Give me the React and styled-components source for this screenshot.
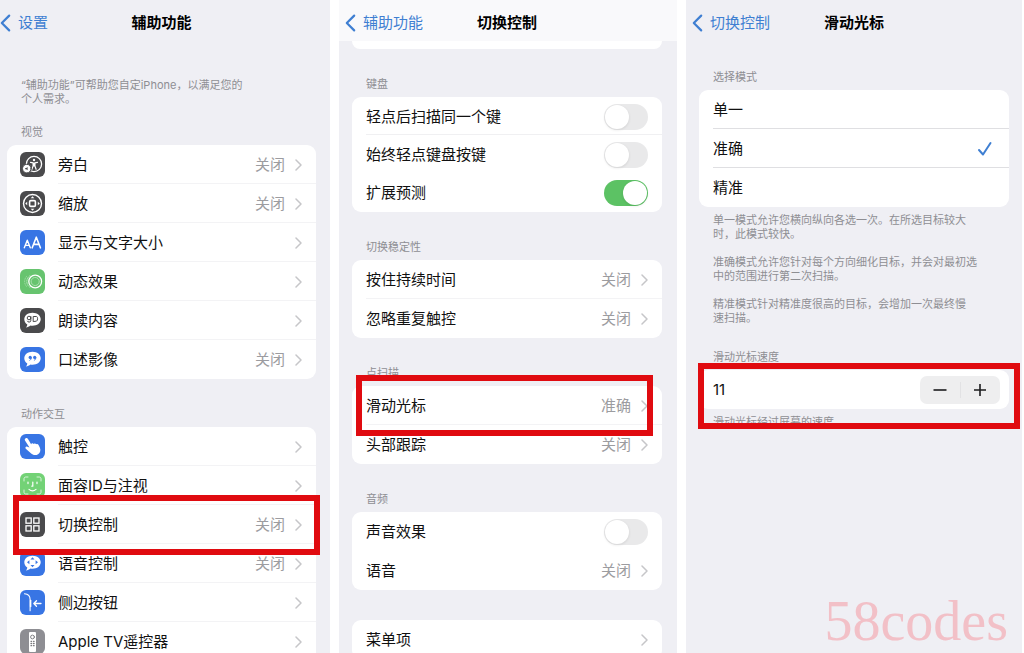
import React, { useState } from 'react';
import styled, { createGlobalStyle } from 'styled-components';

const App = () => {
    const [mode, setMode] = useState('准确');
    const [speed, setSpeed] = useState(11);

    return (
        <>
            <GlobalStyle />
            <Page>
                <Screen $left={7} $right={14}>
                    <NavBar back="设置" title="辅助功能" />
                    <Content>
                        <Intro>
                            “辅助功能”可帮助您自定iPhone，以满足您的
                            <br />
                            个人需求。
                        </Intro>
                        <Section $space={19}>
                            <SectionTitle>视觉</SectionTitle>
                            <Card>
                                {vision.map((item) => (
                                    <LinkRow key={item.label} {...item} />
                                ))}
                            </Card>
                        </Section>
                        <Section>
                            <SectionTitle>动作交互</SectionTitle>
                            <Card>
                                {motor.map((item) => (
                                    <LinkRow key={item.label} {...item} />
                                ))}
                            </Card>
                        </Section>
                    </Content>
                </Screen>

                <Screen $left={13} $right={15}>
                    <NavBar back="辅助功能" title="切换控制" raised />
                    <Content>
                        <CardEnd />
                        <Section>
                            <SectionTitle>键盘</SectionTitle>
                            <Card $compact>
                                <ToggleRow label="轻点后扫描同一个键" divided />
                                <ToggleRow label="始终轻点键盘按键" />
                                <ToggleRow label="扩展预测" defaultChecked />
                            </Card>
                        </Section>
                        <Section>
                            <SectionTitle>切换稳定性</SectionTitle>
                            <Card>
                                <LinkRow label="按住持续时间" value="关闭" />
                                <LinkRow label="忽略重复触控" value="关闭" />
                            </Card>
                        </Section>
                        <Section>
                            <SectionTitle>点扫描</SectionTitle>
                            <Card>
                                <LinkRow
                                    label="滑动光标"
                                    value={mode}
                                    marked={{ top: 11, right: -9, bottom: 11, left: -4 }}
                                />
                                <LinkRow label="头部跟踪" value="关闭" />
                            </Card>
                        </Section>
                        <Section>
                            <SectionTitle>音频</SectionTitle>
                            <Card>
                                <ToggleRow label="声音效果" tall />
                                <LinkRow label="语音" value="关闭" />
                            </Card>
                        </Section>
                        <Section $space={30}>
                            <Card>
                                <LinkRow label="菜单项" />
                            </Card>
                        </Section>
                    </Content>
                </Screen>

                <Screen $left={13} $right={13}>
                    <NavBar back="切换控制" title="滑动光标" />
                    <Content>
                        <Section $space={29}>
                            <SectionTitle>选择模式</SectionTitle>
                            <Card>
                                {modes.map((name) => (
                                    <OptionRow key={name}>
                                        <RowBody $line="#dfdfe2">
                                            <RowLabel>{name}</RowLabel>
                                            <Radio
                                                type="radio"
                                                name="mode"
                                                checked={mode === name}
                                                onChange={() => setMode(name)}
                                            />
                                            {mode === name && <CheckIcon />}
                                        </RowBody>
                                    </OptionRow>
                                ))}
                            </Card>
                            <Footnote>
                                单一模式允许您横向纵向各选一次。在所选目标较大
                                <br />
                                时，此模式较快。
                            </Footnote>
                            <Footnote $next>
                                准确模式允许您针对每个方向细化目标，并会对最初选
                                <br />
                                中的范围进行第二次扫描。
                            </Footnote>
                            <Footnote $next>
                                精准模式针对精准度很高的目标，会增加一次最终慢
                                <br />
                                速扫描。
                            </Footnote>
                        </Section>
                        <Section $space={25}>
                            <SectionTitle>滑动光标速度</SectionTitle>
                            <Card>
                                <StepperRow>
                                    <RowLabel>{speed}</RowLabel>
                                    <Stepper>
                                        <StepButton aria-label="减少" onClick={() => setSpeed(speed - 1)}>
                                            <svg width="14" height="14" viewBox="0 0 14 14" stroke="#1c1c1e" strokeWidth="1.6">
                                                <path d="M0.5 7h13" />
                                            </svg>
                                        </StepButton>
                                        <StepLine />
                                        <StepButton aria-label="增加" onClick={() => setSpeed(speed + 1)}>
                                            <svg width="14" height="14" viewBox="0 0 14 14" stroke="#1c1c1e" strokeWidth="1.6">
                                                <path d="M1 7h12M7 1v12" />
                                            </svg>
                                        </StepButton>
                                    </Stepper>
                                    <Mark $top={7} $right={11} $bottom={20} $left={1} />
                                </StepperRow>
                            </Card>
                            <Footnote>滑动光标经过屏幕的速度</Footnote>
                        </Section>
                    </Content>
                    <Watermark>58codes</Watermark>
                </Screen>
            </Page>
        </>
    );
};

const NavBar = ({ back, title, raised }) => (
    <Bar $raised={raised}>
        <Back href="#">
            <svg width="11" height="18" viewBox="0 0 11 18" fill="none" stroke="#3f7fd2" strokeWidth="2.2" strokeLinecap="round" strokeLinejoin="round">
                <path d="M9.2 1.6L1.8 9l7.4 7.4" />
            </svg>
            {back}
        </Back>
        <Title>{title}</Title>
    </Bar>
);

const LinkRow = ({ label, value, icon, color, marked }) => (
    <Row href="#">
        {icon && (
            <Tile $color={color}>
                <svg width="25" height="25" viewBox="0 0 25 25" fill="none" stroke="#fff" strokeLinecap="round" strokeLinejoin="round">
                    {icon}
                </svg>
            </Tile>
        )}
        <RowBody>
            <RowLabel>{label}</RowLabel>
            {value && <RowValue>{value}</RowValue>}
            <Chevron />
        </RowBody>
        {marked && (
            <Mark $top={marked.top} $right={marked.right} $bottom={marked.bottom} $left={marked.left} />
        )}
    </Row>
);

const ToggleRow = ({ label, divided, tall, defaultChecked }) => (
    <OptionRow $short={!tall}>
        <RowBody $line={divided ? '#f0f0f2' : 'transparent'}>
            <RowLabel>{label}</RowLabel>
            <Switch type="checkbox" role="switch" defaultChecked={defaultChecked} />
        </RowBody>
    </OptionRow>
);

const Chevron = () => (
    <svg width="7" height="12" viewBox="0 0 7 12" fill="none" stroke="#c6c6c9" strokeWidth="1.5" strokeLinecap="round" strokeLinejoin="round">
        <path d="M1 1l5 5-5 5" />
    </svg>
);

const CheckIcon = () => (
    <svg width="20" height="16" viewBox="0 0 20 16" fill="none" stroke="#3f7fd2" strokeWidth="2" strokeLinecap="round" strokeLinejoin="round">
        <path d="M4 9l4 4.5L15.5 2" />
    </svg>
);

const dark = '#4a4a4c';
const blue = '#3875e4';
const green = '#67c46f';

// speech bubble shared by several tiles
const Bubble = () => (
    <path d="M12.5 4.8c4.6 0 8.200 2.800 8.200 6.500s-3.600 6.500-8.200 6.500c-.7 0-1.400-.1-2-.2-1.300 1.100-2.900 1.900-4.500 1.900.9-.9 1.300-1.900 1.300-2.900-1.900-1.200-3-3.100-3-5.300 0-3.700 3.600-6.500 8.200-6.500z" fill="#fff" stroke="none" />
);

const vision = [
    {
        label: '旁白',
        value: '关闭',
        color: dark,
        icon: (
            <>
                <circle cx="14" cy="12" r="7.6" strokeWidth="1.3" />
                <circle cx="14" cy="8" r="1.2" fill="#fff" stroke="none" />
                <path d="M10.5 10.4l2.6.5v3l-1.2 3.4M17.5 10.4l-2.6.5v3l1.2 3.4M14 11v3" strokeWidth="1.2" />
                <circle cx="6.8" cy="16.6" r="4.3" fill="#fff" stroke="#4a4a4c" strokeWidth="1" />
                <path d="M5.2 16v1.2h1l1.4 1v-3.2l-1.4 1z" fill="#4a4a4c" stroke="none" />
            </>
        ),
    },
    {
        label: '缩放',
        value: '关闭',
        color: dark,
        icon: (
            <>
                <circle cx="12.5" cy="12.5" r="9" strokeWidth="1.4" />
                <rect x="9.6" y="9.6" width="5.8" height="5.8" rx="1.2" strokeWidth="1.6" />
                <path d="M12.5 5.2l1.8 2h-3.6zM12.5 19.8l1.8-2h-3.6zM5.2 12.5l2-1.8v3.6zM19.8 12.5l-2-1.8v3.6z" fill="#fff" stroke="none" />
            </>
        ),
    },
    {
        label: '显示与文字大小',
        color: blue,
        icon: (
            <>
                <path d="M4.3 17.8l3-7.6 3 7.6M5.300 15.400h4" strokeWidth="1.4" />
                <path d="M12.200 17.800l4.100-10.600 4.100 10.600M13.600 14.400h5.400" strokeWidth="1.6" />
            </>
        ),
    },
    {
        label: '动态效果',
        color: green,
        icon: (
            <>
                <circle cx="15.2" cy="12.5" r="6.4" strokeWidth="1.3" />
                <circle cx="15.2" cy="12.5" r="4" strokeWidth="0.5" strokeDasharray="1 1" />
                <path d="M10 6.6a7 7 0 0 0 0 11.8" strokeWidth="0.9" strokeDasharray="1.4 1.2" opacity="0.5" />
                <path d="M6.6 7.4a7.6 7.6 0 0 0 0 10.2" strokeWidth="0.8" strokeDasharray="1 1.4" opacity="0.4" />
            </>
        ),
    },
    {
        label: '朗读内容',
        color: dark,
        icon: (
            <>
                <Bubble />
                <circle cx="9" cy="10" r="1.800" stroke="#4a4a4c" strokeWidth="1" />
                <path d="M10.800 8.500v4.300c0 1.700-3.100 1.700-3.500.4M13.200 13.200V8.500h3.300c1.500 0 1.500 4.700 0 4.700z" stroke="#4a4a4c" strokeWidth="1" />
            </>
        ),
    },
    {
        label: '口述影像',
        value: '关闭',
        color: blue,
        icon: (
            <>
                <Bubble />
                <circle cx="10.200" cy="10.400" r="1.600" fill="#3875e4" stroke="none" />
                <circle cx="14.700" cy="10.400" r="1.600" fill="#3875e4" stroke="none" />
                <path d="M11.300 10.600c0 1.400-.5 2.200-1.500 2.700M15.800 10.600c0 1.400-.5 2.200-1.500 2.700" stroke="#3875e4" strokeWidth="0.9" />
            </>
        ),
    },
];

const motor = [
    {
        label: '触控',
        color: blue,
        icon: (
            <path d="M5.700 4.300c.9-.5 1.800-.1 2.300.7l3.100 5.200.5-.6c.7-.5 1.600-.3 2.100.4l.4-.3c.8-.4 1.700-.2 2.100.5.800-.5 1.800-.3 2.200.5l1.400 2.900c1.200 2.600.5 5.300-1.700 6.600-2.500 1.500-5.200 1-7.200-.9L5.800 14.700c-1-1 .1-2.600 1.500-2l2.200.9L5 6.500c-.5-.8-.2-1.700.7-2.200z" fill="#fff" stroke="none" />
        ),
    },
    {
        label: '面容ID与注视',
        color: '#73d276',
        icon: (
            <>
                <path d="M4 8V5.800C4 4.800 4.800 4 5.800 4H8M17 4h2.200c1 0 1.800.8 1.800 1.800V8M4 17v2.200c0 1 .8 1.800 1.800 1.800H8M17 21h2.200c1 0 1.800-.8 1.800-1.800V17" strokeWidth="0.9" opacity="0.8" />
                <path d="M8 9v1.600M17 9v1.600M12.800 9v4.200h-1M9 16.400c2 1.700 5 1.700 7 0" strokeWidth="1.2" />
            </>
        ),
    },
    {
        label: '切换控制',
        value: '关闭',
        color: dark,
        marked: { top: 10, right: 4, bottom: 11, left: -6 },
        icon: (
            <g strokeWidth="1.300" strokeLinejoin="miter">
                <rect x="6" y="6" width="5.200" height="5.200" />
                <rect x="13.800" y="6" width="5.200" height="5.200" />
                <rect x="6" y="13.800" width="5.200" height="5.200" />
                <rect x="13.800" y="13.800" width="5.200" height="5.200" />
            </g>
        ),
    },
    {
        label: '语音控制',
        value: '关闭',
        color: blue,
        icon: (
            <>
                <Bubble />
                <path d="M12.500 6.300l2 2.200h-4zM12.500 16.300l2-2.200h-4zM7 11.300l2.400-2v4zM18 11.300l-2.400-2v4z" fill="#3875e4" stroke="none" />
            </>
        ),
    },
    {
        label: '侧边按钮',
        color: blue,
        icon: (
            <>
                <path d="M4.500 3.800c3.500.3 5.600 2.200 5.600 5.600v11.400" strokeWidth="1.100" />
                <path d="M10.600 10.500v6" strokeWidth="1.500" />
                <path d="M21 13.500h-7M16.500 10.800l-2.700 2.700 2.700 2.700" strokeWidth="1.300" />
            </>
        ),
    },
    {
        label: 'Apple TV遥控器',
        color: '#8e8e93',
        icon: (
            <>
                <rect x="9" y="3" width="7" height="20" rx="1" fill="#fff" stroke="none" />
                <g stroke="#77777b" strokeWidth="0.900">
                    <circle cx="12.500" cy="8" r="1.900" />
                    <path d="M11 12.300h.6M13.500 12.300h.6M11 14.500h.6M13.500 14.500h.6M11 16.700h.6M13.500 16.700h.6" strokeWidth="1.300" />
                </g>
            </>
        ),
    },
];

const modes = ['单一', '准确', '精准'];

const GlobalStyle = createGlobalStyle`
    * {
        box-sizing: border-box;
    }

    body {
        margin: 0;
        background: #fff;
        color: #111;
        font-family: Inter, "Noto Sans CJK SC", sans-serif;
        font-size: 15px;
    }
`;

const Page = styled.main`
    display: grid;
    grid-template-columns: 330fr 338fr 336fr;
    column-gap: 9px;
    height: 100vh;
    padding-right: 2px;
`;

const Screen = styled.section`
    --left: ${(props) => props.$left}px;
    --right: ${(props) => props.$right}px;
    position: relative;
    min-width: 0;
    overflow: hidden;
    background: #efeff4;
`;

const Bar = styled.header`
    display: grid;
    grid-template-columns: 1fr auto 1fr;
    align-items: center;
    height: 41px;
    padding: 4px var(--right) 0 var(--left);
    background: ${(props) => (props.$raised ? '#f9f9fb' : 'transparent')};
`;

const Back = styled.a`
    display: flex;
    align-items: center;
    gap: 7px;
    margin-left: -7px;
    color: #3f7fd2;
    line-height: 20px;
    text-decoration: none;
`;

const Title = styled.h1`
    margin: 0;
    color: #000;
    font-size: 15px;
    font-weight: 700;
    line-height: 20px;
`;

const Content = styled.div`
    padding: 0 var(--right) 0 var(--left);
`;

const Intro = styled.p`
    margin: 37px 0 0;
    padding: 0 14px;
    color: #8e8e93;
    font-size: 11px;
    line-height: 14px;
    white-space: nowrap;
`;

const Section = styled.section`
    padding-top: ${(props) => props.$space || 28}px;
`;

const SectionTitle = styled.h2`
    margin: 0 0 6px;
    padding: 0 14px;
    color: #8e8e93;
    font-size: 11px;
    font-weight: 400;
    line-height: 14px;
`;

const Card = styled.div`
    padding-bottom: ${(props) => (props.$compact ? 1 : 0)}px;
    border-radius: 9px;
    background: #fff;
`;

const CardEnd = styled.div`
    height: 8px;
    border-radius: 0 0 9px 9px;
    background: #fff;
`;

const Row = styled.a`
    position: relative;
    display: flex;
    align-items: center;
    gap: 13px;
    height: 39px;
    padding-left: 14px;
    color: inherit;
    text-decoration: none;
`;

const OptionRow = styled.label`
    display: flex;
    height: ${(props) => (props.$short ? 38 : 39)}px;
    padding-left: 14px;
`;

const RowBody = styled.div`
    display: flex;
    flex: 1;
    align-items: center;
    gap: 10px;
    align-self: stretch;
    padding: 2px 14px 0 0;
    border-bottom: 1px solid ${(props) => props.$line || '#f3f3f5'};

    *:last-child > & {
        border-bottom-color: transparent;
    }
`;

const RowLabel = styled.span`
    flex: 1;
    line-height: 20px;
    white-space: nowrap;
`;

const RowValue = styled.span`
    color: #9c9ca0;
    line-height: 20px;
`;

const Tile = styled.span`
    display: flex;
    width: 25px;
    height: 25px;
    margin-left: -1px;
    border-radius: 6px;
    background: ${(props) => props.$color};
`;

const Switch = styled.input`
    appearance: none;
    display: flex;
    width: 44px;
    height: 26px;
    margin: 0;
    padding: 1px;
    border-radius: 13px;
    background: #e9e9ea;

    &::before {
        content: '';
        width: 24px;
        height: 24px;
        border-radius: 50%;
        background: #fff;
        box-shadow: 0 1px 3px rgba(0, 0, 0, 0.1);
    }

    &:checked {
        justify-content: flex-end;
        background: #5cc264;
    }
`;

const Radio = styled.input`
    appearance: none;
    width: 0;
    height: 0;
    margin: 0;
`;

const StepperRow = styled.div`
    position: relative;
    display: flex;
    align-items: center;
    height: 39px;
    padding: 0 9px 0 14px;
`;

const Stepper = styled.div`
    display: flex;
    align-items: center;
    width: 80px;
    height: 28px;
    border-radius: 7px;
    background: #eeeeef;
`;

const StepButton = styled.button`
    display: flex;
    flex: 1;
    align-items: center;
    justify-content: center;
    height: 100%;
    padding: 0;
    border: 0;
    background: none;
`;

const StepLine = styled.span`
    width: 1px;
    height: 16px;
    background: #e2e2e4;
`;

const Footnote = styled.p`
    margin: ${(props) => (props.$next ? 14 : 6)}px 0 0;
    padding: 0 14px;
    color: #8e8e93;
    font-size: 11px;
    line-height: 14px;
    white-space: nowrap;
`;

const Mark = styled.span`
    position: absolute;
    z-index: 1;
    top: -${(props) => props.$top}px;
    right: ${(props) => -props.$right}px;
    bottom: -${(props) => props.$bottom}px;
    left: ${(props) => -props.$left}px;
    border: 6px solid #e00b10;
    pointer-events: none;
`;

const Watermark = styled.span`
    position: absolute;
    right: 14px;
    bottom: 4px;
    color: #f2c0c7;
    font-family: "Liberation Serif", serif;
    font-size: 56px;
    line-height: 56px;
`;

export default App;
